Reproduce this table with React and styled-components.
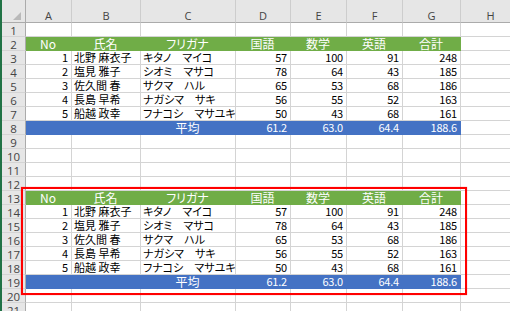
import styled, { createGlobalStyle } from "styled-components";

const GlobalStyle = createGlobalStyle`
  html, body { margin: 0; padding: 0; background: #fff; overflow: hidden; }
  body { font-family: "Noto Sans CJK JP", "Noto Sans", sans-serif; }
`;

const COLS = ['A', 'B', 'C', 'D', 'E', 'F', 'G', 'H'];
const WIDTHS = '24px 46px 69px 95px 55px 56px 56px 58px 60px';
const GREEN = '#70ad47';
const BLUE = '#4472c4';

const students = [
  [1, '北野 麻衣子', 'キタノ　マイコ', 57, 100, 91, 248],
  [2, '塩見 雅子', 'シオミ　マサコ', 78, 64, 43, 185],
  [3, '佐久間 春', 'サクマ　ハル', 65, 53, 68, 186],
  [4, '長島 早希', 'ナガシマ　サキ', 56, 55, 52, 163],
  [5, '船越 政幸', 'フナコシ　マサユキ', 50, 43, 68, 161],
];
const heads = ['No', '氏名', 'フリガナ', '国語', '数学', '英語', '合計'];
const averages = ['61.2', '63.0', '64.4', '188.6'];

const Frame = styled.div`
  display: flex;
  height: 311px;
  overflow: hidden;
`;

const Edge = styled.div`
  width: 2px;
  flex: none;
  background: #217346;
`;

const Sheet = styled.div`
  position: relative;
  flex: 1;
  display: grid;
  grid-template-columns: ${WIDTHS};
  grid-template-rows: 23px;
  grid-auto-rows: 14px;
  align-content: start;
`;

const Row = styled.div`
  display: contents;
`;

const Corner = styled.div`
  box-sizing: border-box;
  background: #e6e6e6;
  border-right: 1px solid #ababab;
  border-bottom: 1px solid #ababab;
  display: flex;
  align-items: flex-end;
  justify-content: flex-end;
  padding: 0 4px 2px 0;
`;

const ColHead = styled.div`
  box-sizing: border-box;
  background: #e6e6e6;
  border-right: 1px solid #cdcdcd;
  border-bottom: 1px solid #ababab;
  color: #444;
  font-family: "Open Sans", "Noto Sans", sans-serif;
  font-size: 11px;
  display: flex;
  align-items: center;
  justify-content: center;
  padding-top: 8px;
`;

const RowHead = styled.div`
  box-sizing: border-box;
  background: #e6e6e6;
  border-right: 1px solid #ababab;
  border-bottom: 1px solid #d4d4d4;
  color: #444;
  font-family: "Open Sans", "Noto Sans", sans-serif;
  font-size: 11.5px;
  line-height: 13px;
  text-align: center;
  padding-top: 1px;
`;

const Cell = styled.div`
  box-sizing: border-box;
  background: ${p => p.$fill || '#fff'};
  border-right: 1px solid ${p => p.$fill || '#d4d4d4'};
  border-bottom: 1px solid ${p => p.$fill || '#d4d4d4'};
  color: ${p => (p.$fill ? '#fff' : '#000')};
  font-size: ${p => (p.$head ? '12px' : '11px')};
  line-height: 13px;
  text-align: ${p => p.$align || 'left'};
  padding: 0 3px 0 2px;
  white-space: nowrap;
  font-feature-settings: "palt";
  letter-spacing: ${p => (p.$num ? '-0.2px' : '0')};
`;

const Outline = styled.div`
  position: absolute;
  left: 19px;
  top: 187px;
  width: 446px;
  height: 108px;
  box-sizing: border-box;
  border: 2px solid #ff0000;
  box-shadow: 0 0 1px rgba(255, 0, 0, 0.5);
  pointer-events: none;
`;

const Blank = () => COLS.map(c => <Cell key={c} />);

function buildRows() {
  const rows = [];
  rows.push(<Blank />);
  const table = () => {
    rows.push(
      <>
        {heads.map(h => (
          <Cell key={h} $fill={GREEN} $head $align="center">{h}</Cell>
        ))}
        <Cell />
      </>
    );
    students.forEach(s =>
      rows.push(
        <>
          <Cell $align="right" $num>{s[0]}</Cell>
          <Cell>{s[1]}</Cell>
          <Cell>{s[2]}</Cell>
          {s.slice(3).map((n, i) => (
            <Cell key={i} $align="right" $num>{n}</Cell>
          ))}
          <Cell />
        </>
      )
    );
    rows.push(
      <>
        <Cell $fill={BLUE} />
        <Cell $fill={BLUE} />
        <Cell $fill={BLUE} $head $align="center">平均</Cell>
        {averages.map(a => (
          <Cell key={a} $fill={BLUE} $align="right" $num>{a}</Cell>
        ))}
        <Cell />
      </>
    );
  };
  table();
  for (let i = 0; i < 4; i++) rows.push(<Blank />);
  table();
  rows.push(<Blank />);
  rows.push(<Blank />);
  return rows;
}

export default function App() {
  const rows = buildRows();
  return (
    <>
      <GlobalStyle />
      <Frame>
        <Edge />
        <Sheet>
          <Row>
            <Corner>
              <svg width="8" height="8" viewBox="0 0 8 8">
                <polygon points="8,0 8,8 0,8" fill="#b9b9b9" />
              </svg>
            </Corner>
            {COLS.map(c => <ColHead key={c}>{c}</ColHead>)}
          </Row>
          {rows.map((content, i) => (
            <Row key={i}>
              <RowHead>{i + 1}</RowHead>
              {content}
            </Row>
          ))}
          <Outline />
        </Sheet>
      </Frame>
    </>
  );
}
